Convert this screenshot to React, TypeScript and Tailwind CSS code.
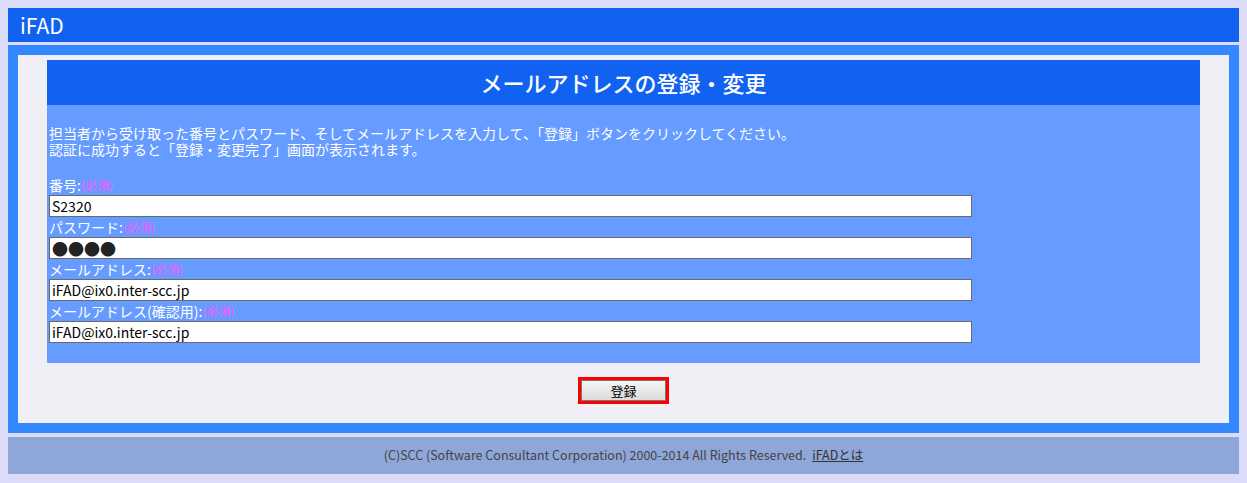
export default function App() {
  const fields = [
    { label: '番号:', value: 'S2320', password: false },
    { label: 'パスワード:', value: '●●●●', password: true },
    { label: 'メールアドレス:', value: 'iFAD@ix0.inter-scc.jp', password: false },
    { label: 'メールアドレス(確認用):', value: 'iFAD@ix0.inter-scc.jp', password: false },
  ]

  return (
    <div
      className="min-h-screen bg-[#dcdcf8] px-2 pt-2 pb-[9px]"
      style={{ fontFamily: '"Noto Sans CJK JP", "Liberation Sans", sans-serif' }}
    >
      <div className="h-[34px] bg-[#1262f2] text-white text-[21px] pl-3 flex items-center leading-none">
        iFAD
      </div>

      <div className="mt-[3px] bg-[#3388ff] p-[10px]">
        <div className="bg-[#f0eff5] px-[29px] pt-[5px] pb-[19px]">
          <div className="bg-[#669cff]">
            <div className="h-[45px] bg-[#1262f2] flex items-center justify-center text-white text-[22px] font-medium">
              メールアドレスの登録・変更
            </div>
            <div className="pt-[20px] pb-[20px] pl-[2px]">
              <p className="text-white text-[14px] leading-[16px] mb-[18px]">
                担当者から受け取った番号とパスワード、そしてメールアドレスを入力して、「登録」ボタンをクリックしてください。
                <br />
                認証に成功すると「登録・変更完了」画面が表示されます。
              </p>
              {fields.map(f => (
                <div key={f.label}>
                  <div className="h-5 leading-5 text-white text-[14px] flex items-center">
                    <span>{f.label}</span>
                    <span className="text-[#ff55ff] text-[12px]">(必須)</span>
                  </div>
                  <div className="w-[923px] h-[22px] border border-[#6a6a6a] bg-white flex items-center pl-[2px] text-black">
                    {f.password ? (
                      <span className="text-[16px] leading-none text-[#222]">{f.value}</span>
                    ) : (
                      <span className="text-[14px] leading-none">{f.value}</span>
                    )}
                  </div>
                </div>
              ))}
            </div>
          </div>

          <div className="mt-[14px] flex justify-center">
            <div className="border-[3px] border-[#ff0000]">
              <button
                type="button"
                className="w-[85px] h-[21px] border border-[#777] bg-gradient-to-b from-[#f6f6f6] to-[#dadada] text-[13px] text-black leading-none flex items-center justify-center"
              >
                登録
              </button>
            </div>
          </div>
        </div>
      </div>

      <div className="mt-1 h-[37px] bg-[#8fa7d8] flex items-center justify-center text-[12.5px] text-[#444]">
        <span>(C)SCC (Software Consultant Corporation) 2000-2014 All Rights Reserved.</span>
        <a href="#" className="ml-[6px] underline text-[#333]">iFADとは</a>
      </div>
    </div>
  )
}
